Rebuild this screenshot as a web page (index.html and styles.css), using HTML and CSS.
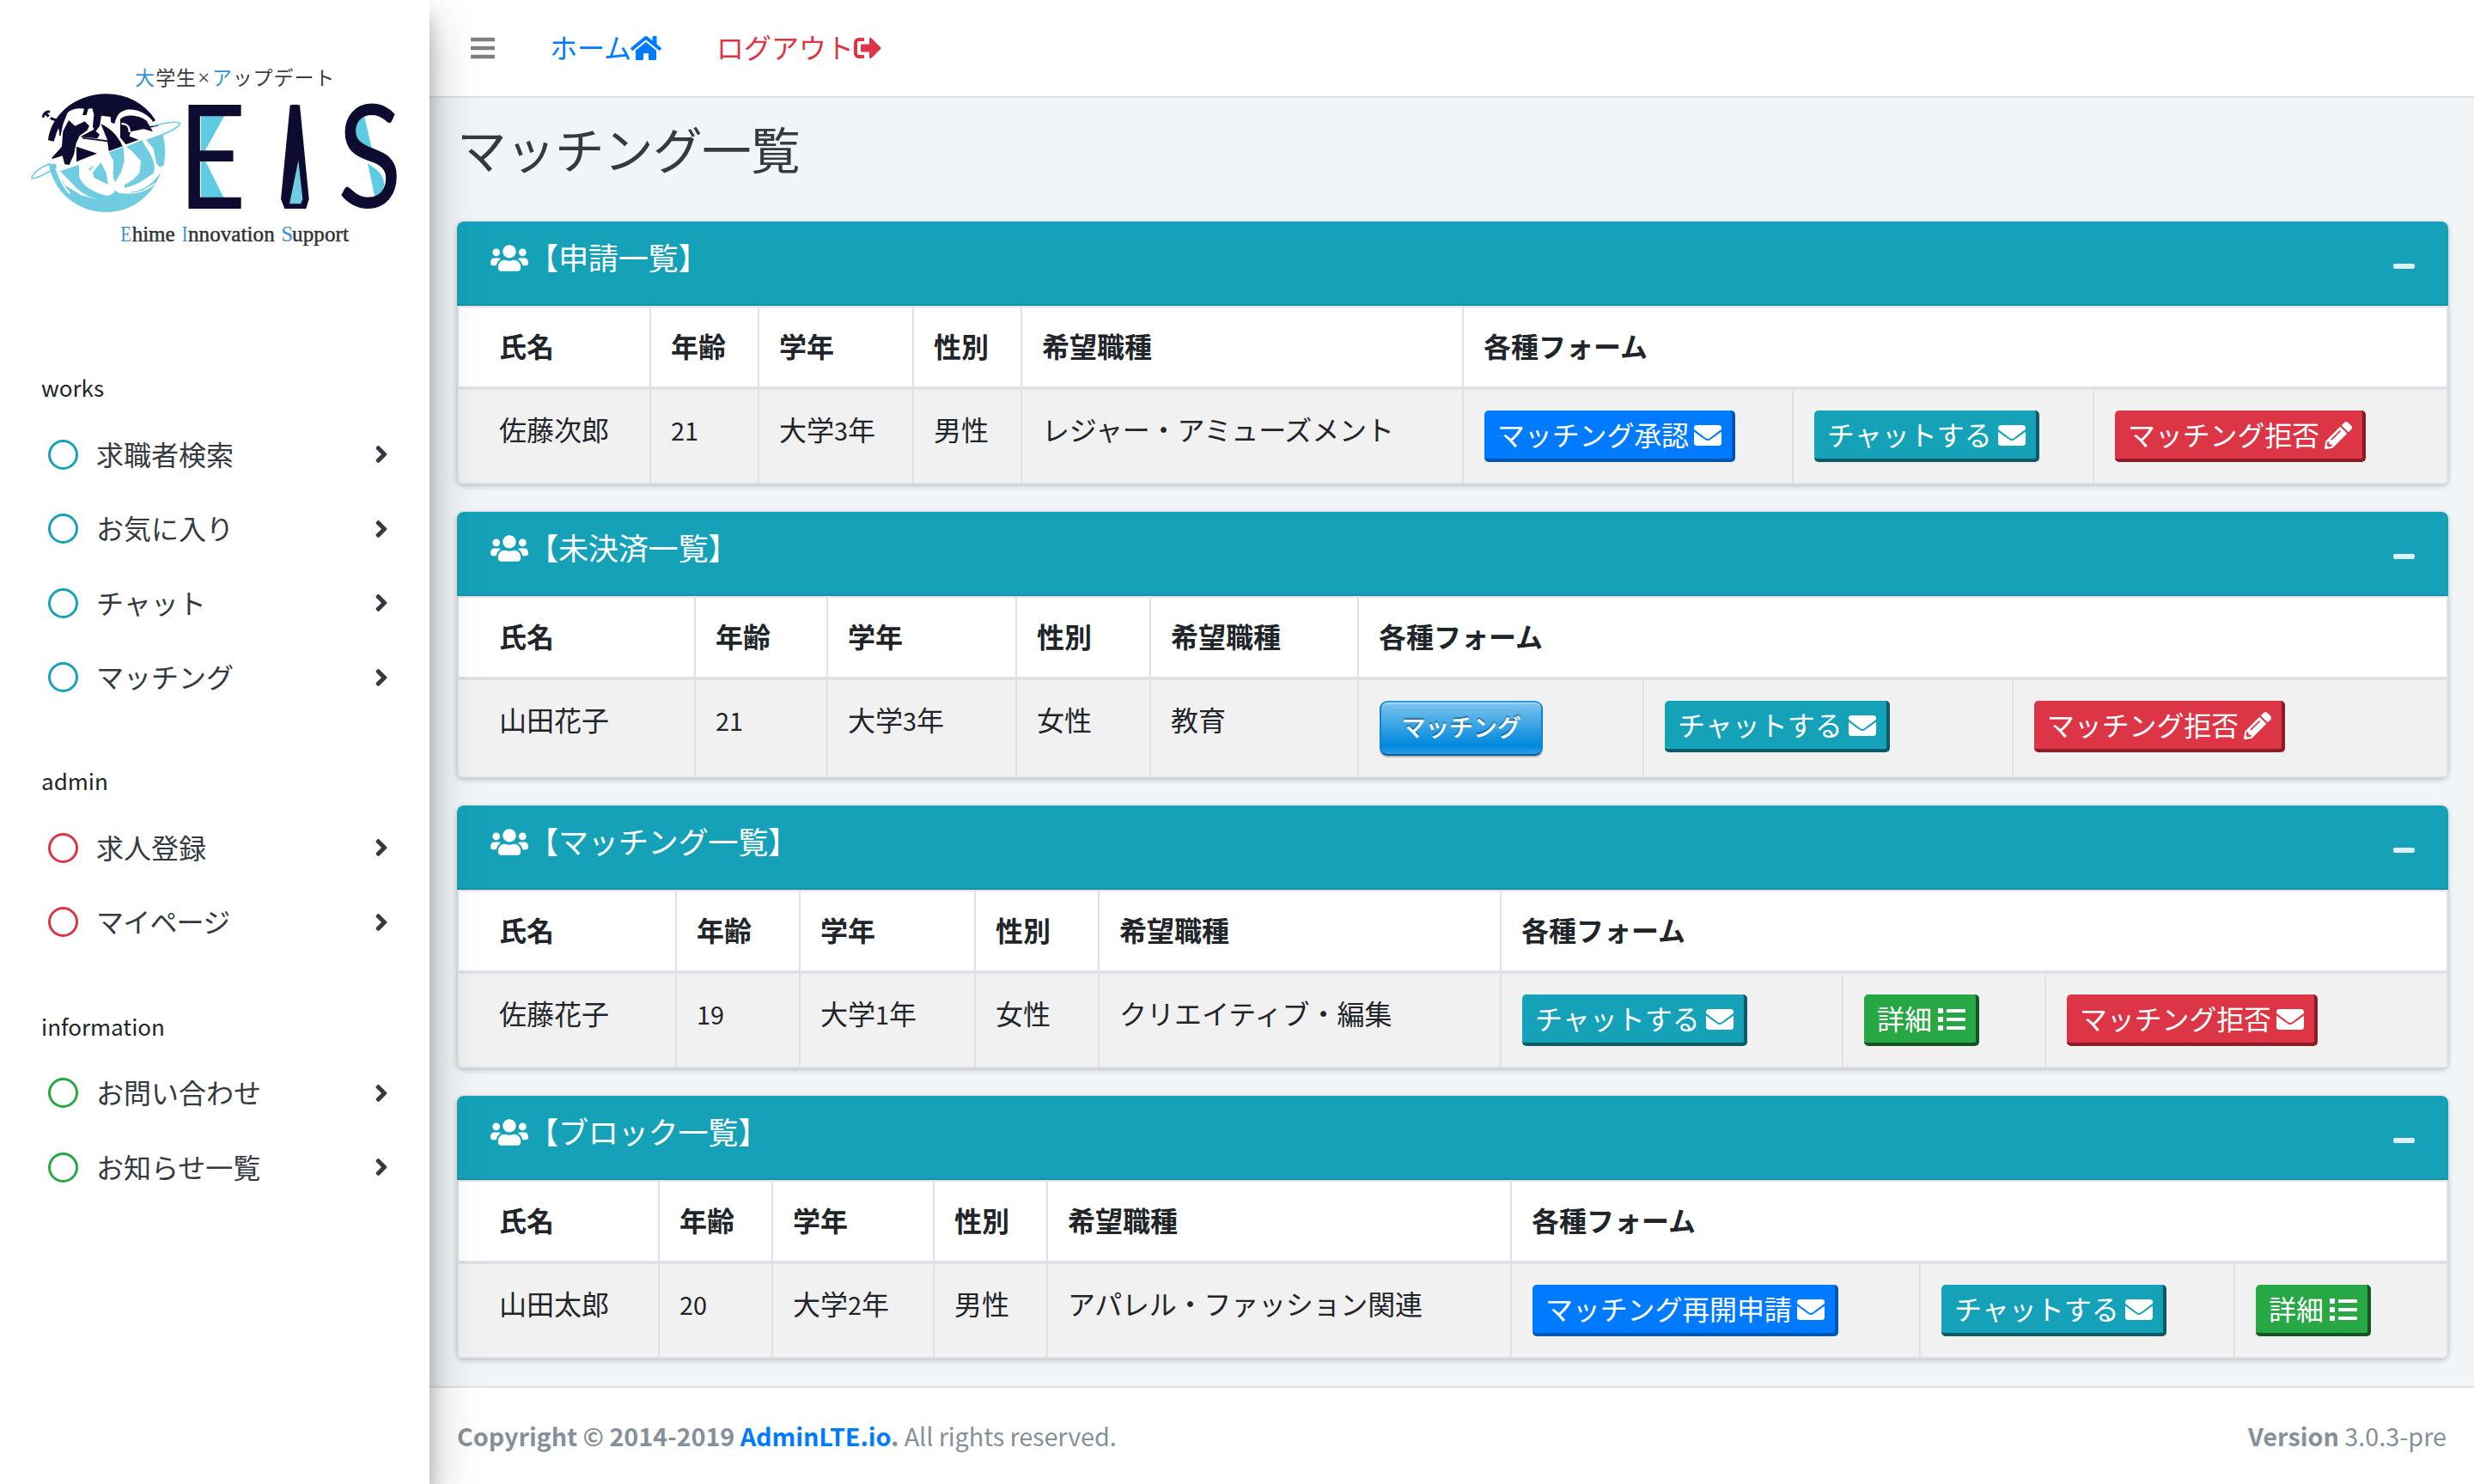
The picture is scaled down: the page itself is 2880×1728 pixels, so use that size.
FILE: index.html
```html
<!DOCTYPE html>
<html lang="ja">
<head>
<meta charset="utf-8">
<title>マッチング一覧</title>
<link rel="stylesheet" href="styles.css">
</head>
<body>
<svg class="sprite" aria-hidden="true">
  <symbol id="envelope" viewBox="0 0 512 512"><path d="M502.3 190.8c3.9-3.1 9.7-.2 9.7 4.7V400c0 26.5-21.5 48-48 48H48c-26.5 0-48-21.5-48-48V195.6c0-5 5.7-7.8 9.7-4.7 22.4 17.4 52.1 39.5 154.1 113.6 21.1 15.4 56.7 47.8 92.2 47.6 35.7.3 72-32.8 92.3-47.6 102-74.1 131.6-96.3 154-113.7zM256 320c23.2.4 56.6-29.2 73.4-41.4 132.7-96.3 142.8-104.7 173.4-128.7 5.8-4.5 9.2-11.5 9.2-18.9v-19c0-26.5-21.5-48-48-48H48c-26.5 0-48 21.5-48 48v19c0 7.4 3.4 14.3 9.2 18.9 30.6 23.9 40.7 32.4 173.4 128.7 16.8 12.2 50.2 41.8 73.4 41.4z"/></symbol>
  <symbol id="pencil" viewBox="0 0 512 512"><path d="M497.9 142.1l-46.1 46.1c-4.7 4.7-12.3 4.7-17 0l-111-111c-4.7-4.7-4.7-12.3 0-17l46.1-46.1c18.7-18.7 49.1-18.7 67.9 0l60.1 60.1c18.8 18.7 18.8 49.1 0 67.9zM284.2 99.8L21.6 362.4.4 483.9c-2.9 16.4 11.4 30.6 27.8 27.8l121.5-21.3 262.6-262.6c4.7-4.7 4.7-12.3 0-17l-111-111c-4.8-4.7-12.4-4.7-17.1 0zM124.1 339.9c-5.5-5.5-5.5-14.3 0-19.8l154-154c5.5-5.5 14.3-5.5 19.8 0s5.5 14.3 0 19.8l-154 154c-5.5 5.5-14.3 5.5-19.8 0zM88 424h48v36.3l-64.5 11.3-31.1-31.1L51.7 376H88v48z"/></symbol>
  <symbol id="list" viewBox="0 0 512 512"><path d="M80 368H16a16 16 0 0 0-16 16v64a16 16 0 0 0 16 16h64a16 16 0 0 0 16-16v-64a16 16 0 0 0-16-16zm0-320H16A16 16 0 0 0 0 64v64a16 16 0 0 0 16 16h64a16 16 0 0 0 16-16V64a16 16 0 0 0-16-16zm0 160H16a16 16 0 0 0-16 16v64a16 16 0 0 0 16 16h64a16 16 0 0 0 16-16v-64a16 16 0 0 0-16-16zm416 176H176a16 16 0 0 0-16 16v32a16 16 0 0 0 16 16h320a16 16 0 0 0 16-16v-32a16 16 0 0 0-16-16zm0-320H176a16 16 0 0 0-16 16v32a16 16 0 0 0 16 16h320a16 16 0 0 0 16-16V80a16 16 0 0 0-16-16zm0 160H176a16 16 0 0 0-16 16v32a16 16 0 0 0 16 16h320a16 16 0 0 0 16-16v-32a16 16 0 0 0-16-16z"/></symbol>
  <symbol id="home" viewBox="0 0 576 512"><path d="M280.37 148.26L96 300.11V464a16 16 0 0 0 16 16l112.06-.29a16 16 0 0 0 15.92-16V368a16 16 0 0 1 16-16h64a16 16 0 0 1 16 16v95.64a16 16 0 0 0 16 16.05L464 480a16 16 0 0 0 16-16V300L295.67 148.26a12.19 12.19 0 0 0-15.3 0zM571.6 251.47L488 182.56V44.05a12 12 0 0 0-12-12h-56a12 12 0 0 0-12 12v72.61L318.47 43a48 48 0 0 0-61 0L4.34 251.47a12 12 0 0 0-1.6 16.9l25.5 31A12 12 0 0 0 45.15 301l235.22-193.74a12.19 12.19 0 0 1 15.3 0L530.9 301a12 12 0 0 0 16.9-1.6l25.5-31a12 12 0 0 0-1.7-16.93z"/></symbol>
  <symbol id="logout" viewBox="0 0 512 512"><path d="M497 273L329 441c-15 15-41 4.5-41-17v-96H152c-13.3 0-24-10.7-24-24v-96c0-13.3 10.7-24 24-24h136V88c0-21.4 25.9-32 41-17l168 168c9.3 9.4 9.3 24.6 0 34zM192 436v-40c0-6.6-5.4-12-12-12H96c-17.7 0-32-14.3-32-32V160c0-17.7 14.3-32 32-32h84c6.6 0 12-5.4 12-12V76c0-6.6-5.4-12-12-12H96c-53 0-96 43-96 96v192c0 53 43 96 96 96h84c6.6 0 12-5.4 12-12z"/></symbol>
  <symbol id="bars" viewBox="0 0 448 512"><path d="M16 132h416c8.8 0 16-7.2 16-16V76c0-8.8-7.2-16-16-16H16C7.2 60 0 67.2 0 76v40c0 8.8 7.2 16 16 16zm0 160h416c8.8 0 16-7.2 16-16v-40c0-8.8-7.2-16-16-16H16c-8.8 0-16 7.2-16 16v40c0 8.8 7.2 16 16 16zm0 160h416c8.8 0 16-7.2 16-16v-40c0-8.8-7.2-16-16-16H16c-8.8 0-16 7.2-16 16v40c0 8.8 7.2 16 16 16z"/></symbol>
  <symbol id="users" viewBox="0 0 640 512"><path d="M96 224c35.3 0 64-28.7 64-64s-28.7-64-64-64-64 28.7-64 64 28.7 64 64 64zm448 0c35.3 0 64-28.7 64-64s-28.7-64-64-64-64 28.7-64 64 28.7 64 64 64zm32 32h-64c-17.6 0-33.5 7.1-45.1 18.6 40.3 22.1 68.9 62 75.1 109.4h66c17.7 0 32-14.3 32-32v-32c0-35.3-28.7-64-64-64zm-256 0c61.9 0 112-50.1 112-112S381.9 32 320 32 208 82.1 208 144s50.1 112 112 112zm76.8 32h-8.3c-20.8 10-43.9 16-68.5 16s-47.6-6-68.5-16h-8.3C179.6 288 128 339.6 128 403.2V432c0 26.5 21.5 48 48 48h288c26.5 0 48-21.5 48-48v-28.8c0-63.6-51.6-115.2-115.2-115.2zm-223.7-13.4C161.5 263.1 145.6 256 128 256H64c-35.3 0-64 28.7-64 64v32c0 17.7 14.3 32 32 32h65.9c6.3-47.4 34.9-87.3 75.2-109.4z"/></symbol>
  <symbol id="angle" viewBox="0 0 256 512"><path d="M224.3 273l-136 136c-9.4 9.4-24.6 9.4-33.9 0l-22.6-22.6c-9.4-9.4-9.4-24.6 0-33.9l96.4-96.4-96.4-96.4c-9.4-9.4-9.4-24.6 0-33.9L54.3 103c9.4-9.4 24.6-9.4 33.9 0l136 136c9.5 9.4 9.5 24.6.1 34z"/></symbol>
</svg>

<div class="wrapper">
  <aside class="sidebar">
    <svg class="logo" viewBox="0 0 1500 840" role="img" aria-label="EIS">
      <g class="logo-sub" font-size="69">
        <text class="sky" x="471" y="176">大</text>
        <text x="544" y="176" textLength="140">学生</text>
        <text class="times" x="690" y="176" font-size="76">×</text>
        <text class="sky" x="741" y="176">ア</text>
        <text x="812" y="176" textLength="356">ップデート</text>
      </g>
      <g transform="translate(90 180)">
        <!-- upper half of the globe -->
        <path fill="#0d0b30" d="M78 190C86 110 165 28 281 28c72 0 136 34 172 92l-8 6C425 96 385 78 350 84c-26 6-34 24-40 48l-12-4-2-20-32-4-6 36-16 22-8-20 4-42-6-22-14 2-6 22-14 0 6-22c-20-4-44 0-58 14l-16 40-8 36-8-22-8 20-8 26z"/>
        <path fill="#0d0b30" d="M130 158l20-38 22 20 34-16 16 16-8 16-26 18-12 26-8 40-16 36-16-2-8-30-32 10 30-42zM190 178l48-26 20 18-8 14zM177 212l18 6 54 18-72 29zM262 133c30 14 56 34 76 78l-48 17-6-42zM330 116c20-20 66-14 92 6l22 38-42-12-36 12-4 16 32 12-44 17-20-24z"/>
        <path fill="none" stroke="#0d0b30" stroke-width="5" d="M198 182l90 11M362 158l100-20M128 214l-36 40M118 130l2 44M106 140l-6 40"/>
        <path fill="none" stroke="#0d0b30" stroke-width="9" d="M60 110c2-14 12-22 24-19m-16 4l12 12m6 6l24 8"/>
        <path fill="none" stroke="#fff" stroke-width="6" d="M334 132c22 0 30 14 28 30"/>
        <!-- lower half of the globe -->
        <path fill="#70cce0" d="M80 272l24 0 14 40 20 36 56 34 76 20c-40-10-70-22-92-44l-58-60 64-22 8 36 26 34 44 28 24 10c24-6 30-18 28-38l-8-26 0-60-16-28 52-18 2 50-12 40-22 36 6 20c24-6 34-22 34-44l10-20c0 30-10 48-24 66l6 10c50 2 96-18 130-72C446 380 374 441 281 441 180 441 96 370 80 272z"/>
        <path fill="#70cce0" d="M352 212l54-22 28 48c14 24 20 48 12 68l-50 32-50 20 36-32c26-30 20-76-18-102zM420 188l58-19c10 36 12 70 4 108l-14 7-12-14-10-50zM234 302l28-34 8 14 10 20 8 42-14-6-36-18zM214 282l26-20-4 20-14 16z"/>
        <path fill="none" stroke="#fff" stroke-width="6" d="M106 286c14 40 24 66 48 90"/>
        <!-- gaps between the figures -->
        <path fill="#fff" d="M188 278l52-20 12 8-32 24 10 30 50 30 14-6-6-60-22-36 22-8 18 30-4 50 16 24 28-48 4-70 14-4 38 40-6 56-42 40 12 16 40-8 52-30c-30 34-76 44-118 40-30-2-28-14-30-28-4 26-18 36-36 34-50-14-80-40-88-66z"/>
        <path fill="#70cce0" d="M236 302l26-32 8 14 10 22 6 34-36-18zM292 232l48-18c4 34-2 62-28 110l-8-16 6-40zM354 212l50-22 28 44c16 26 18 50 2 72-24 28-56 42-88 50l-2-10c46-22 78-60 54-100z"/>
        <path fill="none" stroke="#70cce0" stroke-width="5" d="M88 296c-44 24-74 36-66 22 8-18 36-38 62-46M444 140c66-18 104-16 92-4-12 14-50 32-90 46"/>
      </g>
      <path fill="#5ccbe3" d="M702 280h84l-72 130h-12zM702 440h14l70 140h-84zM1272 284l31 134-36-18c-50-40-44-90 5-116zM1284 450l30 22c42 36 32 78-4 100z"/>
      <g class="logo-main">
        <text transform="translate(620 608)" font-size="505" textLength="240" lengthAdjust="spacingAndGlyphs">E</text>
        <text transform="translate(1000 608)" font-size="505" textLength="60" lengthAdjust="spacingAndGlyphs">I</text>
        <text transform="translate(1178 606)" font-size="500" textLength="226" lengthAdjust="spacingAndGlyphs">S</text>
      </g>
      <path fill="#0d0b30" d="M1013 247h34l32 328-10 34h-75l-13-34z"/>
      <path fill="#70cce0" d="M1042 440l15 136-7 16h-39z"/>
      <g class="logo-tag" font-size="75">
        <text class="sky" x="421" y="724" textLength="38" lengthAdjust="spacingAndGlyphs">E</text>
        <text x="461" y="724" textLength="150">hime</text>
        <text class="sky" x="635" y="724" textLength="20" lengthAdjust="spacingAndGlyphs">I</text>
        <text x="657" y="724" textLength="302">nnovation</text>
        <text class="sky" x="982" y="724" textLength="36">S</text>
        <text x="1020" y="724" textLength="198">upport</text>
      </g>
    </svg>
    <nav class="menu">
      <section>
        <h2>works</h2>
        <a class="item info"><i></i><span>求職者検索</span><svg><use href="#angle"/></svg></a>
        <a class="item info"><i></i><span>お気に入り</span><svg><use href="#angle"/></svg></a>
        <a class="item info"><i></i><span>チャット</span><svg><use href="#angle"/></svg></a>
        <a class="item info"><i></i><span>マッチング</span><svg><use href="#angle"/></svg></a>
      </section>
      <section>
        <h2>admin</h2>
        <a class="item danger"><i></i><span>求人登録</span><svg><use href="#angle"/></svg></a>
        <a class="item danger"><i></i><span class="kana">マイページ</span><svg><use href="#angle"/></svg></a>
      </section>
      <section>
        <h2>information</h2>
        <a class="item success"><i></i><span>お問い合わせ</span><svg><use href="#angle"/></svg></a>
        <a class="item success"><i></i><span>お知らせ一覧</span><svg><use href="#angle"/></svg></a>
      </section>
    </nav>
  </aside>

  <div class="main">
    <header class="navbar">
      <a class="toggle"><svg class="bars"><use href="#bars"/></svg></a>
      <a class="home"><span>ホーム</span><svg class="wide"><use href="#home"/></svg></a>
      <a class="logout"><span>ログアウト</span><svg><use href="#logout"/></svg></a>
    </header>

    <main class="content">
      <h1>マッチング一覧</h1>

      <section class="card">
        <header><h3><svg><use href="#users"/></svg><span>【申請一覧】</span></h3><b class="minus"></b></header>
        <table>
          <colgroup><col style="width:224px"><col style="width:126px"><col style="width:180px"><col style="width:126px"><col style="width:514px"><col style="width:384px"><col style="width:350px"><col></colgroup>
          <thead><tr><th>氏名</th><th>年齢</th><th>学年</th><th>性別</th><th>希望職種</th><th colspan="3">各種フォーム</th></tr></thead>
          <tbody><tr><td>佐藤次郎</td><td><span class="n">21</span></td><td>大学<span class="n">3</span>年</td><td>男性</td><td class="kana">レジャー・アミューズメント</td>
            <td><a class="btn primary tight"><span>マッチング承認</span><svg><use href="#envelope"/></svg></a></td>
            <td><a class="btn teal"><span>チャットする</span><svg><use href="#envelope"/></svg></a></td>
            <td><a class="btn red tight"><span>マッチング拒否</span><svg><use href="#pencil"/></svg></a></td></tr></tbody>
        </table>
      </section>

      <section class="card">
        <header><h3><svg><use href="#users"/></svg><span>【未決済一覧】</span></h3><b class="minus"></b></header>
        <table>
          <colgroup><col style="width:276px"><col style="width:154px"><col style="width:220px"><col style="width:156px"><col style="width:242px"><col style="width:332px"><col style="width:430px"><col></colgroup>
          <thead><tr><th>氏名</th><th>年齢</th><th>学年</th><th>性別</th><th>希望職種</th><th colspan="3">各種フォーム</th></tr></thead>
          <tbody><tr><td>山田花子</td><td><span class="n">21</span></td><td>大学<span class="n">3</span>年</td><td>女性</td><td>教育</td>
            <td><a class="glossy">マッチング</a></td>
            <td><a class="btn teal"><span>チャットする</span><svg><use href="#envelope"/></svg></a></td>
            <td><a class="btn red tight"><span>マッチング拒否</span><svg><use href="#pencil"/></svg></a></td></tr></tbody>
        </table>
      </section>

      <section class="card">
        <header><h3><svg><use href="#users"/></svg><span>【マッチング一覧】</span></h3><b class="minus"></b></header>
        <table>
          <colgroup><col style="width:254px"><col style="width:144px"><col style="width:204px"><col style="width:144px"><col style="width:468px"><col style="width:398px"><col style="width:236px"><col></colgroup>
          <thead><tr><th>氏名</th><th>年齢</th><th>学年</th><th>性別</th><th>希望職種</th><th colspan="3">各種フォーム</th></tr></thead>
          <tbody><tr><td>佐藤花子</td><td><span class="n">19</span></td><td>大学<span class="n">1</span>年</td><td>女性</td><td>クリエイティブ・編集</td>
            <td><a class="btn teal"><span>チャットする</span><svg><use href="#envelope"/></svg></a></td>
            <td><a class="btn green"><span>詳細</span><svg><use href="#list"/></svg></a></td>
            <td><a class="btn red tight"><span>マッチング拒否</span><svg><use href="#envelope"/></svg></a></td></tr></tbody>
        </table>
      </section>

      <section class="card">
        <header><h3><svg><use href="#users"/></svg><span>【ブロック一覧】</span></h3><b class="minus"></b></header>
        <table>
          <colgroup><col style="width:234px"><col style="width:132px"><col style="width:188px"><col style="width:132px"><col style="width:540px"><col style="width:476px"><col style="width:366px"><col></colgroup>
          <thead><tr><th>氏名</th><th>年齢</th><th>学年</th><th>性別</th><th>希望職種</th><th colspan="3">各種フォーム</th></tr></thead>
          <tbody><tr><td>山田太郎</td><td><span class="n">20</span></td><td>大学<span class="n">2</span>年</td><td>男性</td><td class="kana">アパレル・ファッション関連</td>
            <td><a class="btn primary tight"><span>マッチング再開申請</span><svg><use href="#envelope"/></svg></a></td>
            <td><a class="btn teal"><span>チャットする</span><svg><use href="#envelope"/></svg></a></td>
            <td><a class="btn green"><span>詳細</span><svg><use href="#list"/></svg></a></td></tr></tbody>
        </table>
      </section>
    </main>

    <footer class="footer">
      <p><strong>Copyright © 2014-2019 <a>AdminLTE.io</a>.</strong> All rights reserved.</p>
      <p><b>Version</b> 3.0.3-pre</p>
    </footer>
  </div>
</div>
</body>
</html>
```
FILE: styles.css
```css
* { box-sizing: border-box; }

body {
  margin: 0;
  font: 32px/48px "Noto Sans CJK JP", sans-serif;
  color: #212529;
  background: #f1f5f8;
}

h1, h2, h3, p { margin: 0; font-weight: 400; }
svg { fill: currentColor; }
.sprite { display: none; }

.wrapper { display: flex; height: 1728px; overflow: hidden; }

/* Sidebar */
.sidebar {
  position: relative;
  z-index: 2;
  flex: none;
  width: 500px;
  padding-top: 40px;
  background: #fff;
  color: #343a40;
  box-shadow: 0 28px 56px rgba(0, 0, 0, .25), 0 20px 20px rgba(0, 0, 0, .22);
}
.logo { display: block; width: 500px; height: 280px; }
.logo-sub text { font-family: "Noto Sans CJK JP", sans-serif; font-weight: 400; fill: #3c3c3c; }
.logo-sub text.times { font-family: "Liberation Serif", serif; }
.logo-main text { font-family: Lato, sans-serif; fill: #0d0b30; }
.logo-tag text { font-family: "Liberation Serif", serif; fill: #333; stroke: #333; stroke-width: 1.5; }
.logo text.sky { fill: #3292d8; stroke: none; }

.menu { padding-top: 57px; }
.menu h2 {
  height: 112px;
  padding: 51px 0 0 48px;
  font-size: 26px;
  line-height: 46px;
  color: #212529;
}
.item {
  display: flex;
  align-items: center;
  height: 80px;
  margin-bottom: 6.6px;
  padding: 0 48px 0 56px;
}
.item i { width: 35px; height: 35px; border: 3.3px solid; border-radius: 50%; }
.item span { flex: 1; margin-left: 21px; padding-bottom: 3px; }
.item svg { width: 16px; height: 32px; }
.info i { color: #17a2b8; }
.danger i { color: #dc3545; }
.success i { color: #28a745; }
.item span.kana { letter-spacing: -.8px; }

/* Top bar */
.main { display: flex; flex-direction: column; flex: 1; min-width: 0; }
.navbar {
  display: flex;
  align-items: center;
  height: 114px;
  padding-left: 16px;
  background: #fff;
  border-bottom: 2px solid #dee2e6;
}
.navbar a { display: flex; align-items: center; padding: 0 32px; }
.navbar span { padding-bottom: 4px; }
.navbar svg { width: 32px; height: 32px; margin-left: -1px; }
.navbar .wide { width: 36px; }
.navbar .bars { width: 28px; margin-left: 0; }
.toggle { color: rgba(0, 0, 0, .5); }
.home { color: #007bff; }
.logout { color: #dc3545; }
.logout svg { margin-left: 0; }

/* Cards */
.content { padding: 0 30px 0 32px; }
h1 {
  height: 144px;
  padding-top: 24px;
  font-size: 57.6px;
  line-height: 69px;
  letter-spacing: -.6px;
  color: #343a40;
}
.card {
  margin-bottom: 32px;
  border-radius: 8px;
  background: #fff;
  box-shadow: 0 0 2px rgba(0, 0, 0, .125), 0 2px 6px rgba(0, 0, 0, .2);
  overflow: hidden;
}
.card header {
  display: flex;
  justify-content: space-between;
  height: 98px;
  padding: 22px 39px;
  background: #15a2b9;
  border-bottom: 2px solid #1591a5;
  color: #fff;
}
h3 { display: flex; align-items: center; height: 42px; font-size: 35.2px; line-height: 40px; letter-spacing: -.3px; }
h3 span { padding-bottom: 5px; }
h3 svg { width: 44px; height: 35px; margin-bottom: 1px; }
.minus { width: 25px; height: 6px; margin-top: 27px; border-radius: 2px; background: rgba(255, 255, 255, .85); }

table { width: 100%; table-layout: fixed; border-collapse: separate; border-spacing: 0; border: 2px solid #dee2e6; border-left-width: 0; }
th, td { padding: 0 0 0 23px; text-align: left; vertical-align: top; border-left: 2px solid #dee2e6; white-space: nowrap; }
th { height: 96px; padding-top: 20px; font-weight: 700; border-bottom: 4px solid #dee2e6; }
td { padding-top: 21px; padding-bottom: 24px; background: #f1f1f1; }
th:first-child, td:first-child { padding-left: 47px; }
td.kana { letter-spacing: -.2px; }
.n { font-size: 28.8px; }

/* Buttons */
.btn {
  display: flex;
  align-items: center;
  width: max-content;
  height: 60px;
  margin: 3px 0 0 1px;
  padding: 0 12px 0 15px;
  border: solid;
  border-width: 0 4px 4px 0;
  border-radius: 5px;
  color: #fff;
}
.btn span { padding-bottom: 2px; }
.btn svg { width: 32px; height: 32px; margin: 2px 0 0 7px; }
.btn.tight span { letter-spacing: -.15px; }
.btn.tight svg { margin-left: 6px; }
.primary { background: #007bff; border-color: #0056b3; }
.teal { background: #15a2b9; border-color: #0c5b67; }
.red { background: #dc3545; border-color: #8a1c27; }
.green { background: #28a745; border-color: #145523; }
.glossy {
  display: block;
  width: 190px;
  height: 64px;
  margin: 3px 0 0 1px;
  border: 2px solid #1583cc;
  border-top-color: #229ae6;
  border-bottom-color: #005a96;
  border-radius: 9px;
  background: linear-gradient(#7cc4ec, #0088dd 84%, #2d9ee4);
  box-shadow: 0 2px 1px rgba(0, 0, 0, .22), inset 0 2px 0 rgba(255, 255, 255, .3);
  color: #fff;
  font-size: 28px;
  font-weight: 500;
  line-height: 56px;
  letter-spacing: -.2px;
  text-align: center;
  text-shadow: 0 -2px 1px rgba(0, 0, 0, .35);
}

/* Footer */
.footer {
  display: flex;
  flex: 1;
  justify-content: space-between;
  padding: 32px 32px 0;
  background: #fff;
  border-top: 2px solid #dee2e6;
  color: #869099;
  font-size: 28.8px;
}
.footer p:first-child { letter-spacing: -.08px; }
.footer a { color: #007bff; }
```
